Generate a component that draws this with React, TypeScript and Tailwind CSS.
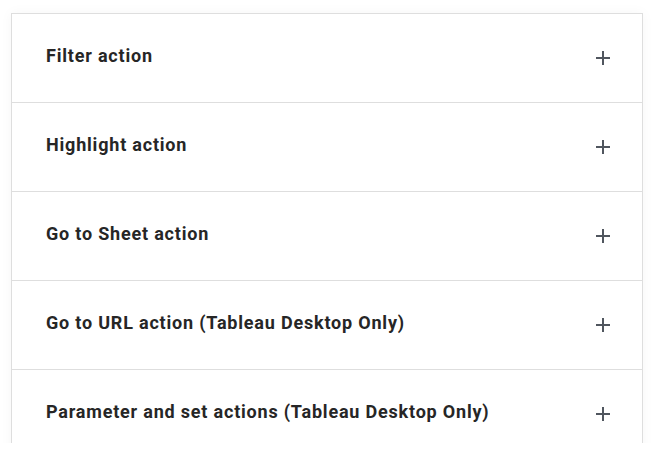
import { useState } from 'react'

const items = [
  'Filter action',
  'Highlight action',
  'Go to Sheet action',
  'Go to URL action (Tableau Desktop Only)',
  'Parameter and set actions (Tableau Desktop Only)',
]

function PlusIcon() {
  return (
    <svg width="16" height="16" viewBox="0 0 16 16" className="text-[#50565e]">
      <path d="M8 1v14M1 8h14" stroke="currentColor" strokeWidth="2" fill="none" />
    </svg>
  )
}

export default function App() {
  const [open, setOpen] = useState<number | null>(null)

  return (
    <div className="h-[443px] overflow-hidden bg-white pl-[11px] pr-[12px] pt-[13px] font-['Roboto',sans-serif]">
      <div className="border border-[#dedede] bg-white shadow-[0_0_12px_rgba(0,0,0,0.04)]">
        {items.map((label, i) => (
          <button
            key={label}
            type="button"
            onClick={() => setOpen(open === i ? null : i)}
            className="flex h-[89px] w-full items-center justify-between border-b border-[#dedede] pl-[34px] pr-[31px] text-left"
          >
            <span className="-mt-[5px] text-[18px] font-bold tracking-[0.8px] text-[#262626]">{label}</span>
            <PlusIcon />
          </button>
        ))}
      </div>
    </div>
  )
}
